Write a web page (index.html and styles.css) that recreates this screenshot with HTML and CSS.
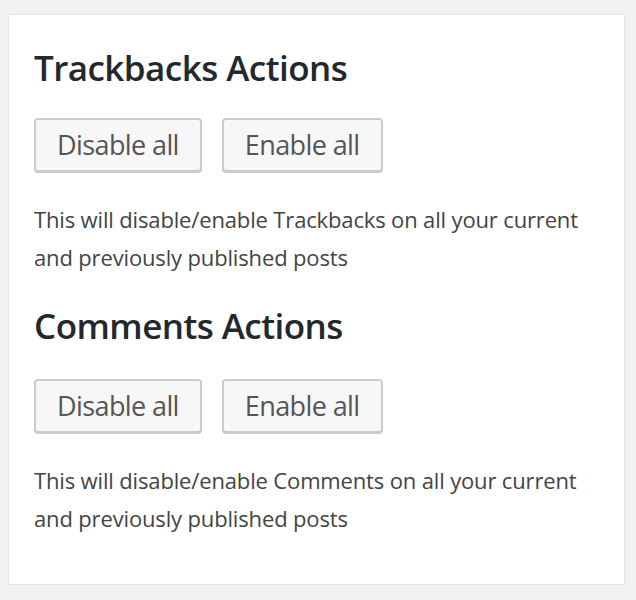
FILE: index.html
```html
<!DOCTYPE html>
<html>
<head>
<meta charset="utf-8">
<link rel="stylesheet" href="styles.css">
</head>
<body>
<div class="card">
  <h2 class="title">Trackbacks Actions</h2>
  <div class="actions">
    <button class="btn">Disable all</button>
    <button class="btn">Enable all</button>
  </div>
  <p class="desc">This will disable/enable Trackbacks on all your current and previously published posts</p>
  <h2 class="title title-next">Comments Actions</h2>
  <div class="actions">
    <button class="btn">Disable all</button>
    <button class="btn">Enable all</button>
  </div>
  <p class="desc desc-last">This will disable/enable Comments on all your current and previously published posts</p>
</div>
</body>
</html>
```
FILE: styles.css
```css
html, body {
  margin: 0;
  padding: 0;
  background: #f1f1f1;
}
body {
  padding: 14px 11px 0 8px;
  font-family: "Open Sans", "Liberation Sans", sans-serif;
}
.card {
  background: #fff;
  border: 1px solid #e5e5e5;
  box-shadow: 0 1px 1px rgba(0,0,0,0.04);
  padding: 33px 25px 47px 25px;
  width: 565px;
}
.title {
  margin: 0;
  font-size: 35px;
  letter-spacing: -0.55px;
  font-weight: 600;
  color: #23282d;
  line-height: 40px;
}
.title-next {
  margin-top: 30px;
  padding-bottom: 3px;
}
.actions {
  display: flex;
  gap: 20px;
  margin-top: 30px;
}
.btn {
  font-family: "Open Sans", "Liberation Sans", sans-serif;
  font-size: 27px;
  letter-spacing: -0.6px;
  color: #555;
  background: #f7f7f7;
  border: 2px solid #ccc;
  border-radius: 4px;
  box-shadow: 0 1px 0 #ccc;
  padding: 0 21px;
  height: 54px;
  line-height: 50px;
  cursor: pointer;
}
.desc {
  margin: 28px 0 0 0;
  font-size: 22px;
  letter-spacing: -0.15px;
  line-height: 38px;
  color: #444;
}
```
